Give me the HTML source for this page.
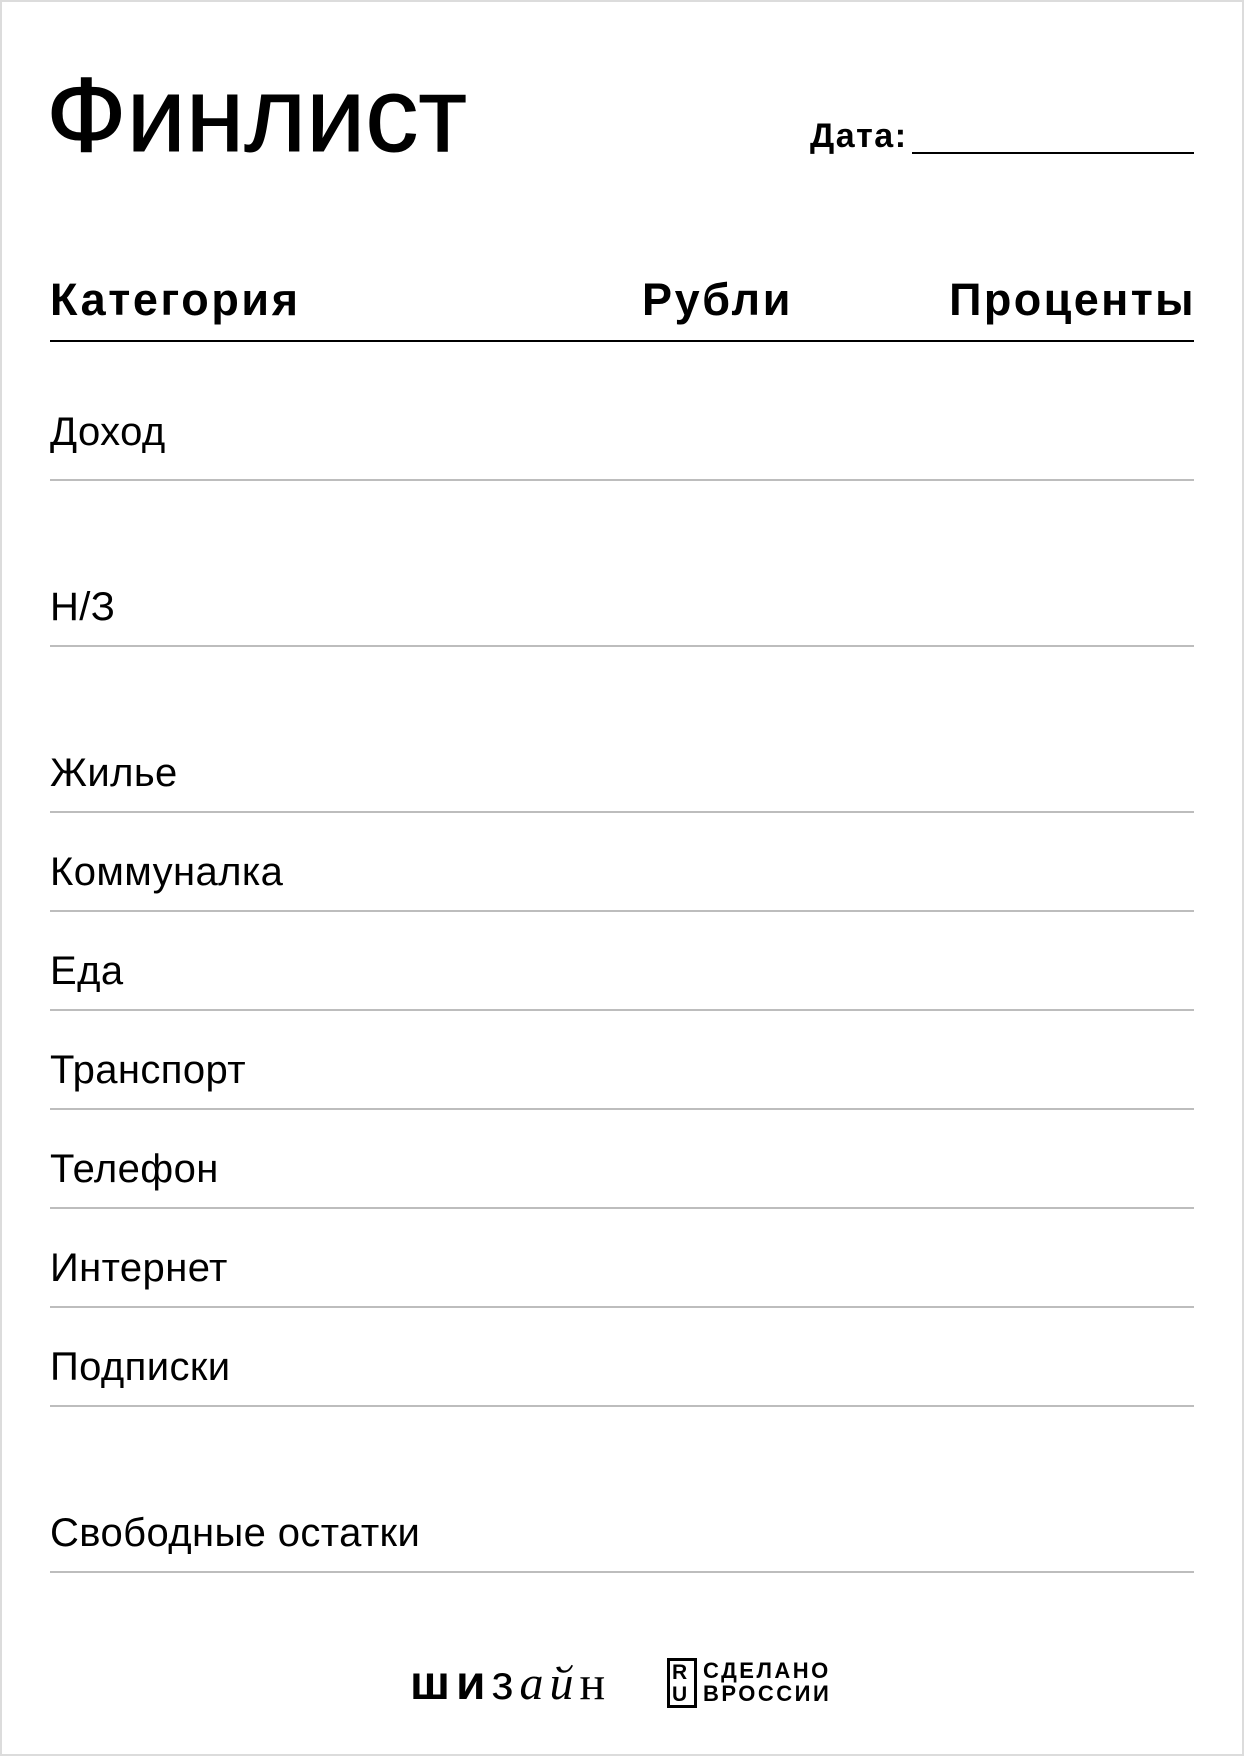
<!DOCTYPE html>
<html><head><meta charset="utf-8"><style>
*{margin:0;padding:0;box-sizing:border-box}
body{width:1244px;height:1756px;background:#fff;position:relative;overflow:hidden;font-family:"Liberation Sans","DejaVu Sans",sans-serif;color:#000}
.frame{position:absolute;left:0;top:0;width:1244px;height:1756px;border:2px solid #dcdcdc}
.t{position:absolute;white-space:nowrap;line-height:1}
.l{position:absolute;left:50px;width:1144px;height:2px;background:#bdbdbd}
.lbl{position:absolute;left:50px;font-size:40px;line-height:1;white-space:nowrap;letter-spacing:0.4px}
.h{font-size:45px;font-weight:bold;letter-spacing:2.6px}
</style></head><body>
<div class="frame"></div>
<div class="t" style="left:46px;top:62px;font-size:106px;-webkit-text-stroke:1px #000">Финлист</div>
<div class="t" style="left:810px;top:119px;font-size:34px;font-weight:bold;letter-spacing:1.5px">Дата:</div>
<div style="position:absolute;left:912px;top:152px;width:282px;height:2px;background:#000"></div>
<div class="t h" style="left:50px;top:277px">Категория</div>
<div class="t h" style="left:642px;top:277px">Рубли</div>
<div class="t h" style="right:48px;top:277px;letter-spacing:2.4px">Проценты</div>
<div style="position:absolute;left:50px;top:340px;width:1144px;height:2px;background:#000"></div>

<div class="lbl" style="top:412px">Доход</div><div class="l" style="top:479px"></div>
<div class="lbl" style="top:587px">Н/З</div><div class="l" style="top:645px"></div>
<div class="lbl" style="top:753px">Жилье</div><div class="l" style="top:811px"></div>
<div class="lbl" style="top:852px">Коммуналка</div><div class="l" style="top:910px"></div>
<div class="lbl" style="top:951px">Еда</div><div class="l" style="top:1009px"></div>
<div class="lbl" style="top:1050px">Транспорт</div><div class="l" style="top:1108px"></div>
<div class="lbl" style="top:1149px">Телефон</div><div class="l" style="top:1207px"></div>
<div class="lbl" style="top:1248px">Интернет</div><div class="l" style="top:1306px"></div>
<div class="lbl" style="top:1347px">Подписки</div><div class="l" style="top:1405px"></div>
<div class="lbl" style="top:1513px">Свободные остатки</div><div class="l" style="top:1571px"></div>

<div class="t" style="left:410px;top:1660px;font-size:48px;font-weight:bold;letter-spacing:6px">ши<span style="font-weight:normal">з</span><span style="font-family:'Liberation Serif',serif;font-weight:normal;font-style:italic">ай</span><span style="font-family:'Liberation Serif',serif;font-weight:normal">н</span></div>
<div style="position:absolute;left:667px;top:1658px;width:30px;height:50px;border:3px solid #000"></div>
<div class="t" style="left:672px;top:1662px;font-size:21px;font-weight:bold">R</div>
<div class="t" style="left:672px;top:1684px;font-size:21px;font-weight:bold">U</div>
<div class="t" style="left:703px;top:1659px;font-size:22px;font-weight:bold;line-height:23px;letter-spacing:2.5px">СДЕЛАНО<br>ВРОССИИ</div>
</body></html>
